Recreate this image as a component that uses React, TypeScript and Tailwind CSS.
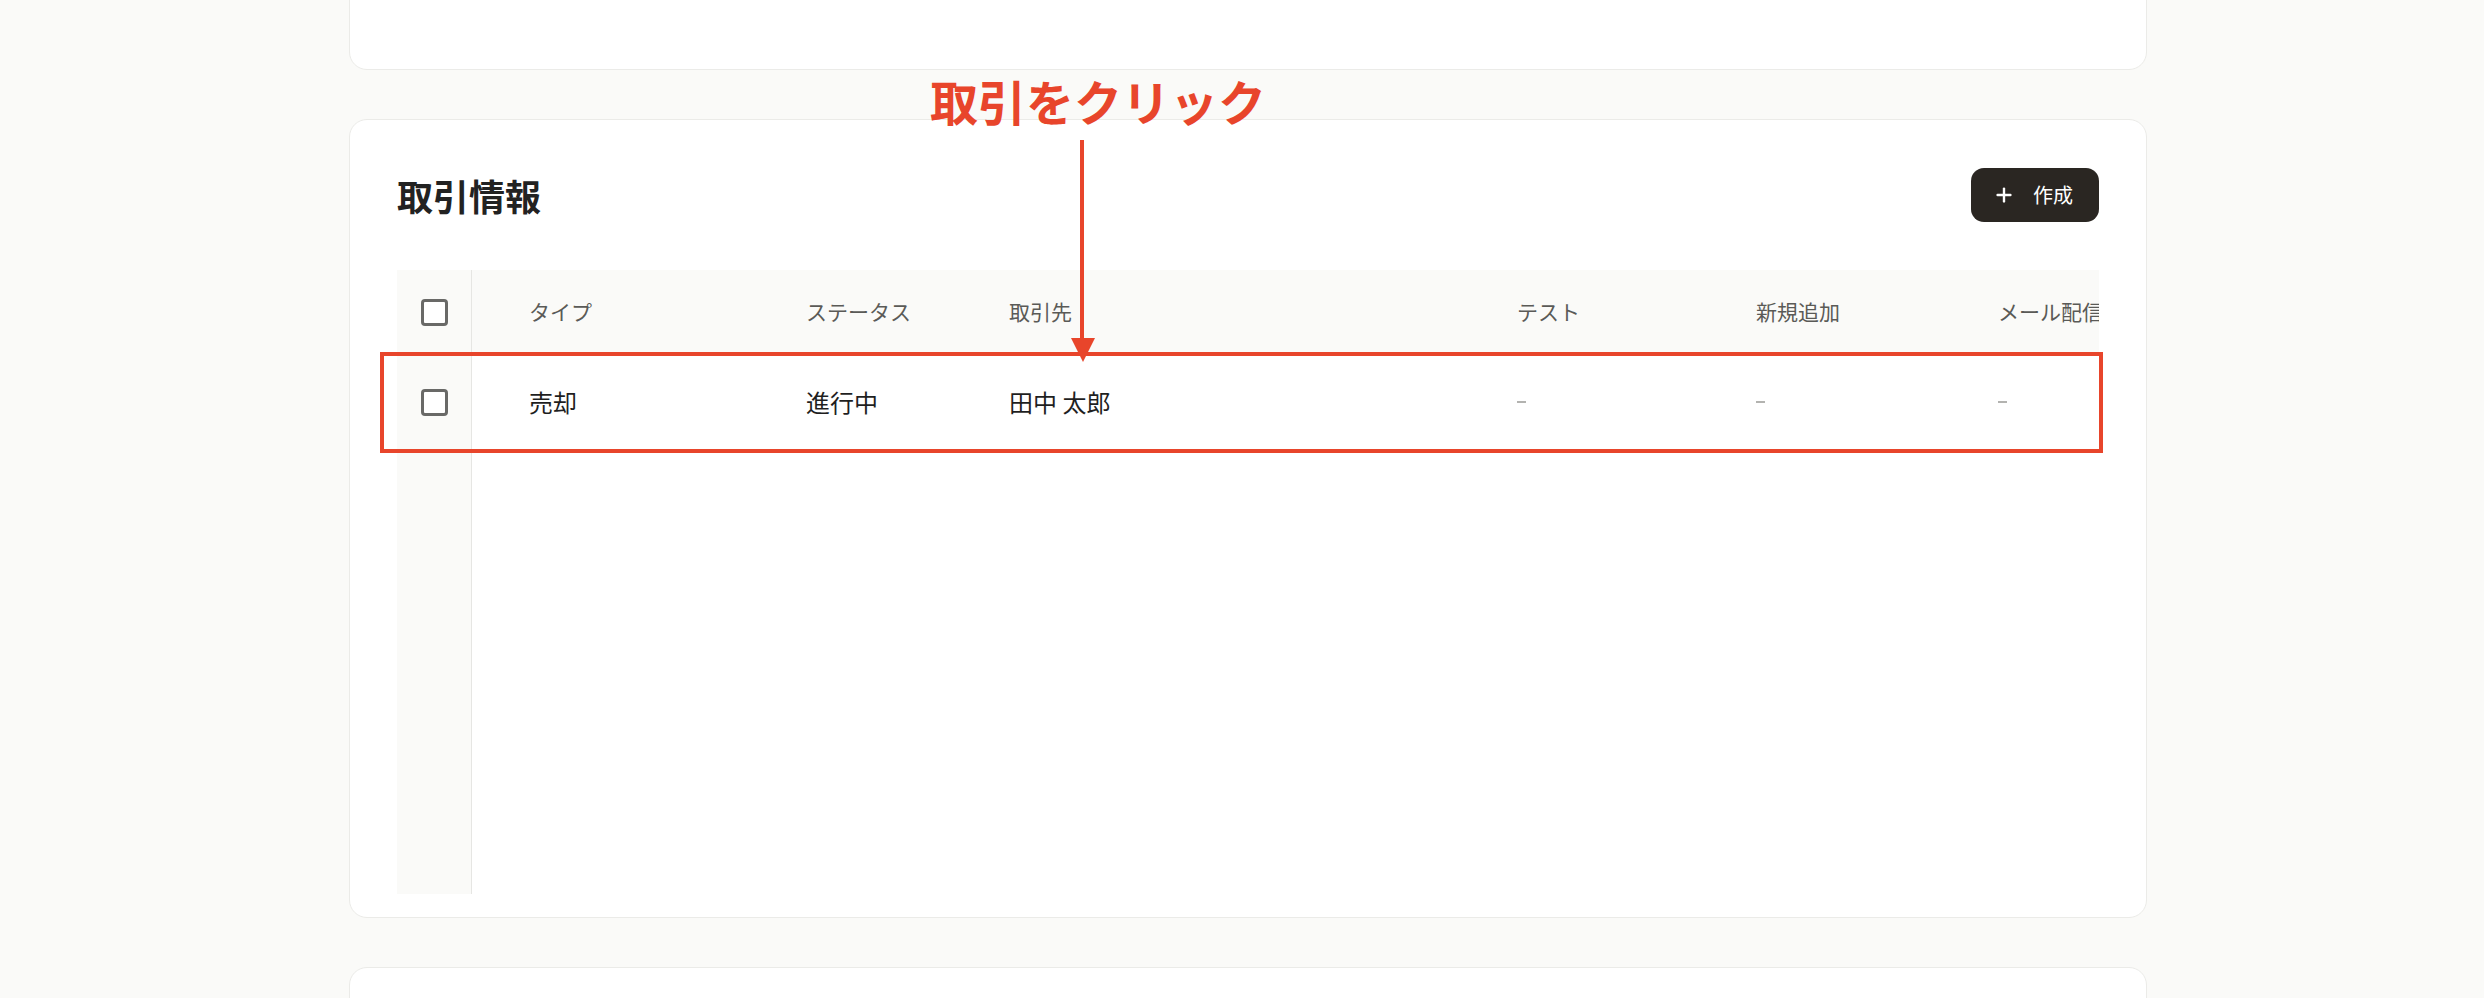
import { Plus } from "lucide-react";

const columns = [
	{ label: "タイプ", value: "売却", w: "w-[277px]" },
	{ label: "ステータス", value: "進行中", w: "w-[203px]" },
	{ label: "取引先", value: "田中 太郎", w: "w-[508px]" },
	{ label: "テスト", value: null, w: "w-[239px]" },
	{ label: "新規追加", value: null, w: "w-[242px]" },
	{ label: "メール配信", value: null, w: "w-[200px]" },
];

function Checkbox() {
	return (
		<div className="w-[27px] h-[27px] rounded-[4px] border-[3px] border-[#696967] bg-white"></div>
	);
}

export default function App() {
	return (
		<div
			className="relative h-[998px] overflow-hidden bg-[#fafaf8] text-[#222]"
			style={{ fontFamily: '"Noto Sans CJK JP", "Noto Sans", sans-serif' }}
		>
			<div className="ml-[349px] w-[1798px] flex flex-col gap-[49px]">
				{/* 上のカード（見切れ） */}
				<div className="-mt-[60px] h-[130px] rounded-[18px] border border-[#ebebe8] bg-white"></div>

				{/* 取引情報カード */}
				<section className="h-[799px] rounded-[18px] border border-[#ebebe8] bg-white px-[47px] pt-[48px]">
					<div className="flex h-[54px] items-center justify-between">
						<h2 className="text-[36px] font-bold leading-none text-[#222]">取引情報</h2>
						<button className="flex h-[54px] items-center gap-[18px] rounded-[13px] bg-[#2a2622] pl-[22px] pr-[26px] text-[20px] text-white">
							<Plus size={22} strokeWidth={2.6} />
							<span>作成</span>
						</button>
					</div>

					{/* テーブル */}
					<div className="mt-[48px] flex h-[624px]">
						<div className="w-[75px] shrink-0 border-r border-[#e6e6e3] bg-[#fafaf8]">
							<div className="flex h-[84px] items-center justify-center">
								<Checkbox />
							</div>
							<div className="flex h-[96px] items-center justify-center">
								<Checkbox />
							</div>
						</div>
						<div className="flex-1 overflow-hidden">
							<div className="flex h-[84px] w-max items-center bg-[#fafaf8]">
								{columns.map((c) => (
									<div key={c.label} className={`${c.w} shrink-0 pl-[57px] text-[21px] text-[#5a5a57] whitespace-nowrap`}>
										{c.label}
									</div>
								))}
							</div>
							<div className="flex h-[96px] w-max items-center">
								{columns.map((c) => (
									<div key={c.label} className={`${c.w} shrink-0 pl-[57px] whitespace-nowrap`}>
										{c.value ? (
											<span className="text-[24px] text-[#1f1f1f]">{c.value}</span>
										) : (
											<div className="h-[2px] w-[9px] bg-[#b3b3b0]"></div>
										)}
									</div>
								))}
							</div>
						</div>
					</div>
				</section>

				{/* 下のカード（見切れ） */}
				<div className="h-[120px] rounded-[18px] border border-[#ebebe8] bg-white"></div>
			</div>

			{/* 注釈 */}
			<div className="absolute left-[930px] top-[76px] text-[48px] font-bold leading-none text-[#e8452b]">
				取引をクリック
			</div>
			<div className="absolute left-[1080px] top-[140px] h-[200px] w-[4px] bg-[#e8452b]"></div>
			<div className="absolute left-[1071px] top-[338px] h-0 w-0 border-x-[12px] border-t-[24px] border-x-transparent border-t-[#e8452b]"></div>
			<div className="absolute left-[380px] top-[352px] h-[101px] w-[1723px] border-[4px] border-[#e8452b]"></div>
		</div>
	);
}
